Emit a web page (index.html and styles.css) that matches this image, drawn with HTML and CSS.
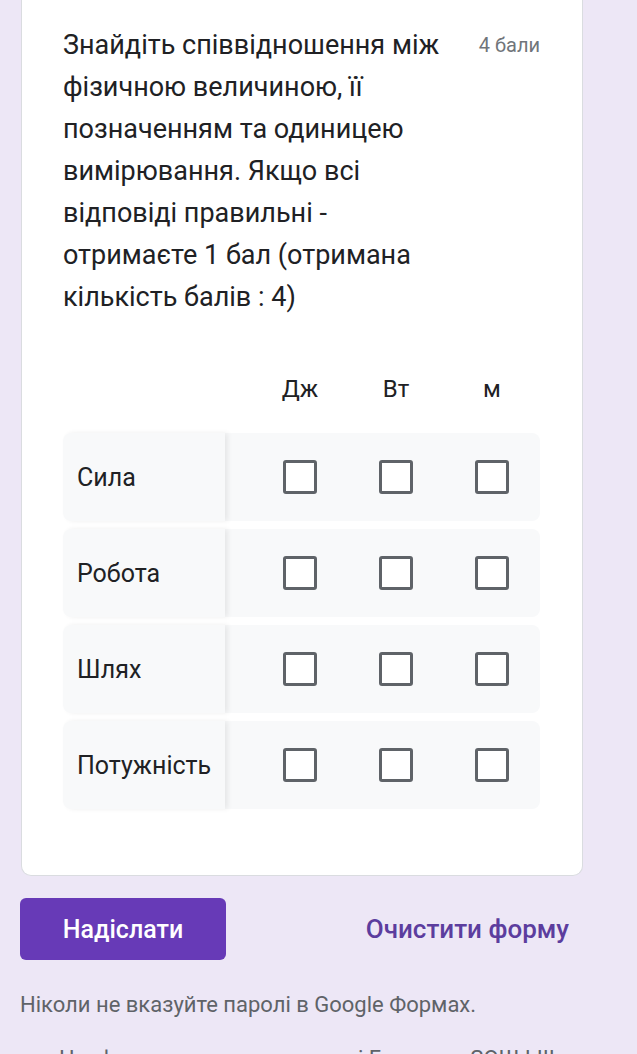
FILE: index.html
```html
<!DOCTYPE html>
<html lang="uk">
<head>
    <meta charset="UTF-8">
    <meta name="viewport" content="width=device-width, initial-scale=1.0">
    <title>Google Форми</title>
    <link rel="stylesheet" href="styles.css">
</head>
<body>
    <div class="page">
        <div class="card">
            <div class="question-head">
                <div class="question-title">Знайдіть співвідношення між фізичною величиною, її позначенням та одиницею вимірювання. Якщо всі відповіді правильні - отримаєте 1 бал (отримана кількість балів : 4)</div>
                <div class="points">4 бали</div>
            </div>

            <div class="grid">
                <div class="grid-head">
                    <div class="row-label"></div>
                    <div class="cells">
                        <div class="col-title">Дж</div>
                        <div class="col-title">Вт</div>
                        <div class="col-title">м</div>
                    </div>
                </div>

                <div class="grid-row">
                    <div class="row-label">Сила</div>
                    <div class="cells">
                        <div class="cell"><span class="checkbox"></span></div>
                        <div class="cell"><span class="checkbox"></span></div>
                        <div class="cell"><span class="checkbox"></span></div>
                    </div>
                </div>
                <div class="grid-row">
                    <div class="row-label">Робота</div>
                    <div class="cells">
                        <div class="cell"><span class="checkbox"></span></div>
                        <div class="cell"><span class="checkbox"></span></div>
                        <div class="cell"><span class="checkbox"></span></div>
                    </div>
                </div>
                <div class="grid-row">
                    <div class="row-label">Шлях</div>
                    <div class="cells">
                        <div class="cell"><span class="checkbox"></span></div>
                        <div class="cell"><span class="checkbox"></span></div>
                        <div class="cell"><span class="checkbox"></span></div>
                    </div>
                </div>
                <div class="grid-row">
                    <div class="row-label">Потужність</div>
                    <div class="cells">
                        <div class="cell"><span class="checkbox"></span></div>
                        <div class="cell"><span class="checkbox"></span></div>
                        <div class="cell"><span class="checkbox"></span></div>
                    </div>
                </div>
            </div>
        </div>

        <div class="actions">
            <button class="submit">Надіслати</button>
            <button class="clear">Очистити форму</button>
        </div>

        <p class="warning">Ніколи не вказуйте паролі в Google Формах.</p>
        <p class="footer">Цю форму створено в домені Гадяцька ЗОШ І-ІІІ ст.</p>
    </div>
</body>
</html>
```

FILE: styles.css
```css
* {
    margin: 0;
    padding: 0;
    box-sizing: border-box;
}

body {
    font-family: Roboto, "Noto Sans", sans-serif;
    background-color: #ede7f6;
    color: #202124;
}

.page {
    width: 563px;
    margin-left: 20px;
}

.card {
    background-color: white;
    border: 1px solid #dadce0;
    border-top: none;
    border-radius: 0 0 10px 10px;
    margin-left: 1px;
    padding: 24px 42px 58px 41px;
}

.question-head {
    display: flex;
    align-items: flex-start;
}

.question-title {
    flex: 1;
    font-size: 27px;
    line-height: 42px;
}

.points {
    flex-shrink: 0;
    margin-left: 28px;
    padding-top: 9px;
    font-size: 20px;
    color: #70757a;
}

.grid {
    margin-top: 49px;
}

.grid-head,
.grid-row {
    display: flex;
}

.grid-head {
    height: 44px;
    margin-bottom: 22px;
    align-items: center;
}

.grid-row {
    height: 88px;
    margin-bottom: 8px;
    background-color: #f8f9fa;
    border-radius: 8px;
}

.row-label {
    width: 162px;
    flex-shrink: 0;
    display: flex;
    align-items: center;
    padding-left: 14px;
    font-size: 25px;
}

.grid-row .row-label {
    position: relative;
    border-radius: 8px 0 0 8px;
    box-shadow: 3px 0 5px rgba(0,0,0,0.07);
}

.cells {
    flex: 1;
    display: flex;
    padding-left: 27px;
}

.col-title,
.cell {
    flex: 1;
    display: flex;
    align-items: center;
    justify-content: center;
}

.col-title {
    font-size: 24px;
}

.checkbox {
    width: 34px;
    height: 34px;
    border: 3px solid #5f6368;
    border-radius: 3px;
    background-color: white;
}

.actions {
    display: flex;
    align-items: center;
    justify-content: space-between;
    margin-top: 22px;
}

button {
    font-family: Roboto, "Noto Sans", sans-serif;
    font-weight: 500;
    border: none;
    cursor: pointer;
}

.submit {
    width: 206px;
    height: 62px;
    font-size: 25px;
    background-color: #673ab7;
    color: white;
    border-radius: 6px;
}

.clear {
    background: none;
    font-size: 26px;
    color: #5c3d9e;
    padding-right: 14px;
}

.warning {
    margin-top: 32px;
    font-size: 22px;
    color: #5f6368;
}

.footer {
    margin-top: 29px;
    padding-left: 39px;
    font-size: 22px;
    color: #5f6368;
}
```
